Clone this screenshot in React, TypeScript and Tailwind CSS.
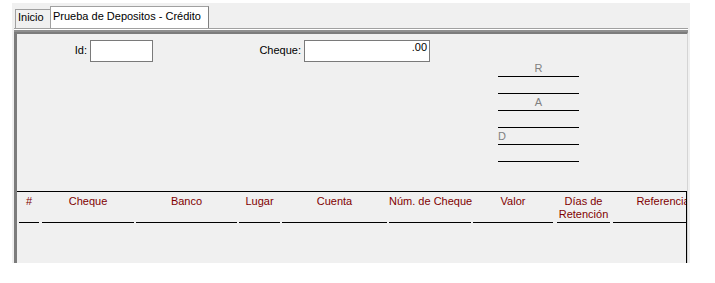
import React from "react";

const columns = [
  { label: "#", w: 20, ml: 2 },
  { label: "Cheque", w: 92, ml: 3 },
  { label: "Banco", w: 101, ml: 2 },
  { label: "Lugar", w: 41, ml: 2 },
  { label: "Cuenta", w: 105, ml: 2 },
  { label: "Núm. de Cheque", w: 82, ml: 2 },
  { label: "Valor", w: 80, ml: 2 },
  { label: "Días de Retención", w: 53, ml: 4 },
  { label: "Referencia", w: 100, ml: 3 },
];

function SignLines() {
  const rows = ["R", "", "A", "", "D", ""];
  return (
    <div className="ml-[68px] w-[81px] pt-[26px]">
      {rows.map((r, i) => (
        <div
          key={i}
          className={
            "flex h-[17px] items-end border-b border-black pb-[2px] leading-[11px] text-[#808080] " +
            (r === "D" ? "justify-start" : "justify-center")
          }
        >
          {r}
        </div>
      ))}
    </div>
  );
}

export default function App() {
  return (
    <div className="h-[283px] w-[715px] overflow-hidden bg-white font-['Liberation_Sans',Arial,sans-serif] text-[11px] text-black">
      <div className="ml-[12px] mt-[3px] flex h-[260px] w-[678px] flex-col bg-[#f0f0f0]">
        {/* tabs */}
        <div className="mt-[3px] flex h-[22px] items-end pl-[3px] leading-[13px]">
          <div className="h-[19px] w-[35px] border-l border-t border-[#a0a0a0] pl-[2px] pt-[1px]">Inicio</div>
          <div className="h-[22px] w-[159px] border-l border-r border-t border-[#a0a0a0] border-r-[#808080] bg-white pl-[2px] pt-[3px]">
            Prueba de Depositos - Crédito
          </div>
        </div>

        <div className="ml-[2px] flex w-[674px] flex-1 flex-col">
          <div className="h-[1px] bg-[#a0a0a0]" />
          <div className="h-[1px] bg-white" />
          <div className="h-[2px] bg-[#8f8f8f]" />

          {/* panel */}
          <div className="flex flex-1 flex-col border-l-[3px] border-r border-t-[2px] border-l-[#7c7c7c] border-r-[#d4d4d4] border-t-[#7c7c7c]">
            <div className="flex h-[157px]">
              <div className="flex items-start pt-[6px] leading-[13px]">
                <div className="w-[70px] pt-[4px] text-right">Id:</div>
                <div className="ml-[3px] h-[22px] w-[63px] border border-[#7a7a7a] bg-white" />
                <div className="w-[148px] pt-[4px] text-right">Cheque:</div>
                <div className="ml-[3px] h-[22px] w-[126px] border border-[#7a7a7a] bg-white pr-[2px] text-right leading-[12px]">
                  .00
                </div>
              </div>
              <SignLines />
            </div>

            {/* grid */}
            <div className="w-[670px] flex-1 border-r border-t border-black">
              <div className="flex overflow-hidden leading-[13px] text-[#800000]">
                {columns.map((c) => (
                  <div
                    key={c.label}
                    style={{ width: c.w, marginLeft: c.ml }}
                    className="h-[31px] shrink-0 border-b border-black pt-[3px] text-center"
                  >
                    {c.label === "Días de Retención" ? (
                      <>
                        Días de
                        <br />
                        Retención
                      </>
                    ) : (
                      <span className="whitespace-nowrap">{c.label}</span>
                    )}
                  </div>
                ))}
              </div>
            </div>
          </div>
        </div>
      </div>
    </div>
  );
}
